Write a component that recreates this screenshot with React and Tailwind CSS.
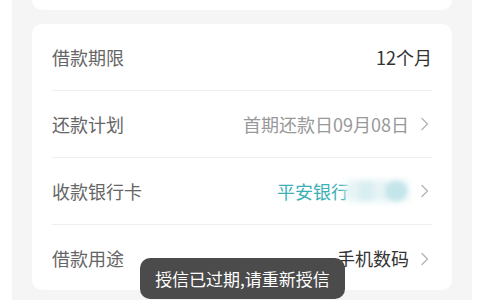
import React from "react";

const Chevron = () => (
  <svg width="10" height="16" viewBox="0 0 10 16" className="ml-[11px] mr-[2px]" fill="none">
    <path d="M2 2.5 L7.5 8 L2 13.5" stroke="#b5b5b5" strokeWidth="1.4" strokeLinecap="round" strokeLinejoin="round" />
  </svg>
);

function Row({ label, children, last }) {
  return (
    <div className={`h-[67px] flex items-center justify-between ${last ? "" : "border-b border-[#efefef]"}`}>
      <span className="text-[18px] text-[#666666]">{label}</span>
      <div className="flex items-center">{children}</div>
    </div>
  );
}

export default function App() {
  return (
    <div
      className="w-[480px] h-[300px] overflow-hidden bg-white relative"
      style={{ fontFamily: '"Noto Sans CJK SC", "Noto Sans", sans-serif' }}
    >
      <div className="ml-[12px] w-[460px] h-[300px] bg-[#f5f5f5] flex flex-col items-center">
        <div className="w-[420px] h-[10px] bg-white rounded-b-[10px]"></div>
        <div className="mt-[14px] w-[420px] h-[266px] bg-white rounded-[10px] px-[20px]">
          <Row label="借款期限">
            <span className="text-[18px] text-[#333333]">12个月</span>
          </Row>
          <Row label="还款计划">
            <span className="text-[18px] text-[#999999]">首期还款日09月08日</span>
            <Chevron />
          </Row>
          <Row label="收款银行卡">
            <span className="text-[18px] text-[#3cb0b6]">平安银行</span>
            <div className="relative w-[66px] h-[24px] -ml-[6px]">
              <div className="absolute left-[2px] top-[1px] w-[64px] h-[22px] rounded-[6px] bg-[#e6f4f5] blur-[3px]"></div>
              <div className="absolute left-[16px] top-[3px] w-[14px] h-[18px] rounded-[4px] bg-[#d8eef0] blur-[2px]"></div>
              <div className="absolute left-[42px] top-[2px] w-[22px] h-[20px] rounded-[10px] bg-[#c4e5ea] blur-[2px]"></div>
            </div>
            <Chevron />
          </Row>
          <Row label="借款用途" last>
            <span className="text-[18px] text-[#333333]">手机数码</span>
            <Chevron />
          </Row>
        </div>
      </div>
      <div className="absolute left-[140px] top-[258px] w-[205px] h-[41px] rounded-[10px] bg-[#4b4b4b] flex items-center justify-center">
        <span className="text-[17px] text-white">授信已过期,请重新授信</span>
      </div>
    </div>
  );
}
